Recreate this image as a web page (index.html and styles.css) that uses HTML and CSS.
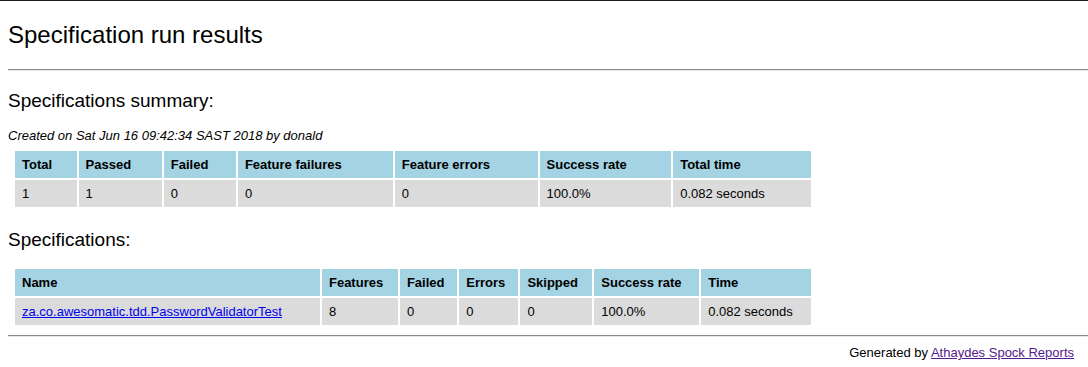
FILE: index.html
```html
<!DOCTYPE html>
<html lang="en">
<head>
  <meta charset="UTF-8">
  <title>Specification run results</title>
  <link rel="stylesheet" href="styles.css">
</head>
<body>
  <h2>Specification run results</h2>
  <hr>
  <div class="summary-report">
    <h3>Specifications summary:</h3>
    <div class="date-test-ran">Created on Sat Jun 16 09:42:34 SAST 2018 by donald</div>
    <table class="summary-table">
      <thead>
        <tr>
          <th>Total</th><th>Passed</th><th>Failed</th><th>Feature failures</th>
          <th>Feature errors</th><th>Success rate</th><th>Total time</th>
        </tr>
      </thead>
      <tbody>
        <tr>
          <td>1</td><td>1</td><td>0</td><td>0</td><td>0</td><td>100.0%</td><td>0.082 seconds</td>
        </tr>
      </tbody>
    </table>
  </div>
  <h3>Specifications:</h3>
  <table class="summary-table specs">
    <thead>
      <tr>
        <th>Name</th><th>Features</th><th>Failed</th><th>Errors</th>
        <th>Skipped</th><th>Success rate</th><th>Time</th>
      </tr>
    </thead>
    <tbody>
      <tr>
        <td><a href="za.co.awesomatic.tdd.PasswordValidatorTest.html">za.co.awesomatic.tdd.PasswordValidatorTest</a></td>
        <td>8</td><td>0</td><td>0</td><td>0</td><td>100.0%</td><td>0.082 seconds</td>
      </tr>
    </tbody>
  </table>
  <hr class="bottom">
  <div class="footer">Generated by <a href="https://github.com/renatoathaydes/spock-reports">Athaydes Spock Reports</a></div>
</body>
</html>
```

FILE: styles.css
```css
html { border-top: 1px solid #1c1c1c; }
body { font-family: "Liberation Sans", Helvetica, Arial, sans-serif; margin: 0 0 0 8px; background: #fff; color: #000; }
h2 { font-size: 24px; font-weight: normal; margin: 20px 0 0; line-height: 28px; }
h3 { font-size: 19px; font-weight: normal; margin: 20px 0 0; line-height: 22px; }
.summary-report h3 { margin-top: 19px; }
hr { margin: 20px 0 0; border: none; border-top: 1px solid #8c8c8c; border-bottom: 1px solid #e6e6e6; }
hr.bottom { margin-top: 8px; }
.date-test-ran { font-size: 13px; font-style: italic; margin-top: 16px; }
.summary-table { width: 800px; margin: 6px 0 0 5px; border-spacing: 2px; font-size: 13px; }
.summary-table.specs { margin-top: 16px; }
.summary-table th { background: #a4d3e3; font-weight: bold; text-align: left; padding: 0 7px; height: 27px; }
.summary-table td { background: #dbdbdb; padding: 0 7px; height: 27px; }
.summary-table a { color: #0000ee; }
.footer { font-size: 13px; text-align: right; padding: 8px 14px 0 0; }
.footer a { color: #551a8b; }
```
